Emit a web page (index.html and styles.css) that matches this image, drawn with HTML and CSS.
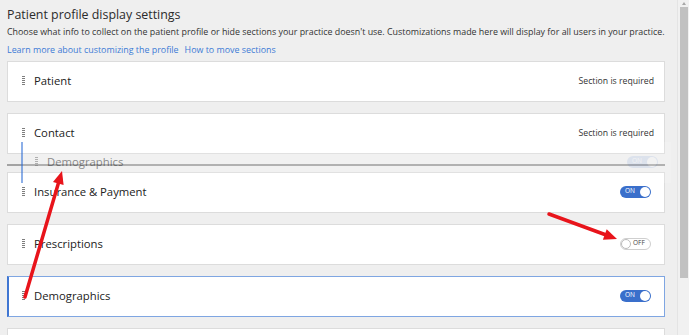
FILE: index.html
```html
<!DOCTYPE html>
<html lang="en">
<head>
    <meta charset="UTF-8">
    <title>Patient profile display settings</title>
    <link rel="stylesheet" href="styles.css">
</head>
<body>
    <div class="page">
        <div class="settings">
            <h1 class="title">Patient profile display settings</h1>
            <p class="intro">Choose what info to collect on the patient profile or hide sections your practice doesn't use. Customizations made here will display for all users in your practice.</p>
            <div class="links">
                <a href="#">Learn more about customizing the profile</a>
                <a href="#">How to move sections</a>
            </div>

            <div class="section-list">
                <div class="section">
                    <span class="grip"></span>
                    <span class="section-name">Patient</span>
                    <span class="required">Section is required</span>
                </div>
                <div class="section">
                    <span class="grip"></span>
                    <span class="section-name">Contact</span>
                    <span class="required">Section is required</span>
                </div>
                <div class="drop-line"></div>
                <div class="section">
                    <span class="grip"></span>
                    <span class="section-name">Insurance &amp; Payment</span>
                    <span class="toggle on"><span class="toggle-label">ON</span><span class="knob"></span></span>
                </div>
                <div class="section">
                    <span class="grip"></span>
                    <span class="section-name">Prescriptions</span>
                    <span class="toggle off"><span class="knob"></span><span class="toggle-label">OFF</span></span>
                </div>
                <div class="section selected">
                    <span class="grip"></span>
                    <span class="section-name">Demographics</span>
                    <span class="toggle on"><span class="toggle-label">ON</span><span class="knob"></span></span>
                </div>
                <div class="section"></div>

                <!-- item being dragged -->
                <div class="section drag-ghost">
                    <span class="grip"></span>
                    <span class="section-name">Demographics</span>
                    <span class="toggle on"><span class="toggle-label">ON</span><span class="knob"></span></span>
                </div>
            </div>

            <svg class="annotations" width="689" height="335" viewBox="0 0 689 335">
                <line x1="25" y1="297" x2="58.3" y2="183.5" />
                <polygon points="62,171 63.6,185 53,181.9" />
                <line x1="549" y1="214" x2="604.8" y2="234.5" />
                <polygon points="617,239 602.9,239.7 606.7,229.3" />
            </svg>
        </div>

        <div class="scrollbar">
            <span class="scroll-arrow"></span>
            <span class="scroll-thumb"></span>
        </div>
    </div>
</body>
</html>
```

FILE: styles.css
```css
* {
    margin: 0;
    padding: 0;
    box-sizing: border-box;
}

body {
    font-family: 'Open Sans', 'Noto Sans', sans-serif;
    background: #efefef;
    color: #333;
    overflow: hidden;
}

.page {
    display: flex;
    height: 335px;
}

.settings {
    flex: 1;
    padding: 6px 12px 0 7px;
    overflow: hidden;
}

.title {
    font-size: 12.4px;
    font-weight: 400;
    line-height: 18px;
    color: #2b2b2b;
}

.intro {
    font-size: 8.9px;
    line-height: 13px;
    margin-top: 1px;
}

.links {
    display: flex;
    gap: 6px;
    margin-top: 5px;
    font-size: 8.9px;
    line-height: 13px;
}

.links a {
    color: #3d7bd6;
    text-decoration: none;
}

.section-list {
    position: relative;
    margin-top: 5px;
}

.section {
    display: flex;
    align-items: center;
    height: 41px;
    margin-bottom: 11px;
    padding: 0 10px 0 14px;
    background: #fff;
    border: 1px solid #dcdcdc;
}

.section.selected {
    border-color: #7fa6e2;
    border-left: 2px solid #3f76d2;
    padding-left: 13px;
}

.grip {
    width: 3px;
    height: 10px;
    margin-right: 9px;
    margin-top: -1px;
    background: repeating-linear-gradient(to bottom, #7e7e7e 0 1px, transparent 1px 2px);
}

.section-name {
    flex: 1;
    font-size: 11.3px;
    color: #222;
    margin-top: -2px;
}

.required {
    font-size: 8.7px;
    color: #333;
    margin-top: -2px;
}

.drop-line {
    height: 2px;
    margin: -1px 0 6px;
    background: #a3a3a3;
}

.toggle {
    display: flex;
    align-items: center;
    width: 31px;
    height: 12px;
    margin-right: 3px;
    margin-top: -2px;
    border-radius: 6px;
    font-size: 6.5px;
    line-height: 1;
}

.toggle.on {
    background: #3a6fcb;
    color: #fff;
    padding: 0 1px 0 5px;
    justify-content: space-between;
}

.toggle.on .knob {
    width: 10px;
    height: 10px;
    border-radius: 50%;
    background: #fff;
}

.toggle.off {
    background: #fff;
    border: 1px solid #cfcfcf;
    color: #444;
    padding: 0 3px 0 0;
    gap: 2px;
}

.toggle.off .knob {
    width: 10px;
    height: 10px;
    border-radius: 50%;
    border: 1px solid #bcbcbc;
    background: #fff;
}

.drag-ghost {
    position: absolute;
    top: 81px;
    left: 14px;
    width: calc(100% - 8px);
    margin: 0;
    opacity: 0.55;
    background: rgba(255, 255, 255, 0.3);
    border: none;
    border-left: 2px solid #2f6fd6;
    padding-left: 12px;
}

.drag-ghost .section-name {
    color: #333;
}

.drag-ghost .toggle {
    opacity: 0.2;
}

.annotations {
    position: absolute;
    top: 0;
    left: 0;
    pointer-events: none;
}

.annotations line {
    stroke: #e8141b;
    stroke-width: 3.5;
    stroke-linecap: round;
}

.annotations polygon {
    fill: #e8141b;
}

.scrollbar {
    width: 12px;
    display: flex;
    flex-direction: column;
    align-items: center;
    background: #f1f1f1;
    border-left: 1px solid #e4e4e4;
}

.scroll-arrow {
    width: 0;
    height: 0;
    margin-top: 2px;
    border-left: 2px solid transparent;
    border-right: 2px solid transparent;
    border-bottom: 3px solid #a8a8a8;
}

.scroll-thumb {
    width: 8px;
    height: 271px;
    margin-top: 2px;
    background: #c1c1c1;
}
```
